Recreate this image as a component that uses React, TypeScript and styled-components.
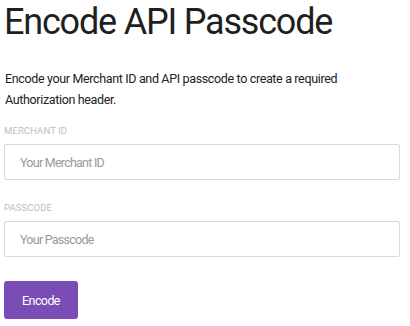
import React from 'react';
import styled, { createGlobalStyle } from 'styled-components';

const GlobalStyle = createGlobalStyle`
  html, body {
    margin: 0;
    padding: 0;
    background: #fff;
  }
  body {
    font-family: Roboto, 'Liberation Sans', sans-serif;
    color: #222;
  }
`;

const Page = styled.main`
  width: 396px;
  padding: 0 10px 0 4px;
`;

const Title = styled.h1`
  margin: 0;
  padding-top: 2px;
  font-size: 36px;
  font-weight: 400;
  line-height: 40px;
  letter-spacing: -1.2px;
  color: #1f1f1f;
`;

const Intro = styled.p`
  max-width: 345px;
  margin: 26px 0 0;
  padding-left: 1px;
  font-size: 12.5px;
  line-height: 21px;
  letter-spacing: -0.35px;
  color: #222;
`;

const Form = styled.form`
  display: flex;
  flex-direction: column;
  margin-top: 15px;
`;

const Field = styled.div`
  display: flex;
  flex-direction: column;
  gap: 7px;
  margin-bottom: 22px;
`;

const Label = styled.label`
  font-size: 9.5px;
  line-height: 12px;
  color: #bdbdbd;
  letter-spacing: 0.1px;
`;

const Input = styled.input`
  box-sizing: border-box;
  width: 100%;
  height: 36px;
  padding: 0 15px;
  border: 1px solid #d9d9d9;
  border-radius: 2px;
  font-family: inherit;
  font-size: 12.5px;
  letter-spacing: -0.75px;
  color: #222;
  outline: none;

  &::placeholder {
    color: #9a9a9a;
  }
`;

const Button = styled.button`
  align-self: flex-start;
  width: 74px;
  height: 38px;
  margin-top: 2px;
  border: none;
  border-radius: 3px;
  background: #7a4cb5;
  color: #fff;
  font-family: inherit;
  font-size: 12.5px;
  letter-spacing: -0.6px;
  cursor: pointer;
`;

export default function App() {
  return (
    <>
      <GlobalStyle />
      <Page>
        <Title>Encode API Passcode</Title>
        <Intro>
          Encode your Merchant ID and API passcode to create a required
          Authorization header.
        </Intro>
        <Form onSubmit={e => e.preventDefault()}>
          <Field>
            <Label htmlFor="merchant">MERCHANT ID</Label>
            <Input id="merchant" placeholder="Your Merchant ID" />
          </Field>
          <Field>
            <Label htmlFor="passcode">PASSCODE</Label>
            <Input id="passcode" placeholder="Your Passcode" />
          </Field>
          <Button type="submit">Encode</Button>
        </Form>
      </Page>
    </>
  );
}
